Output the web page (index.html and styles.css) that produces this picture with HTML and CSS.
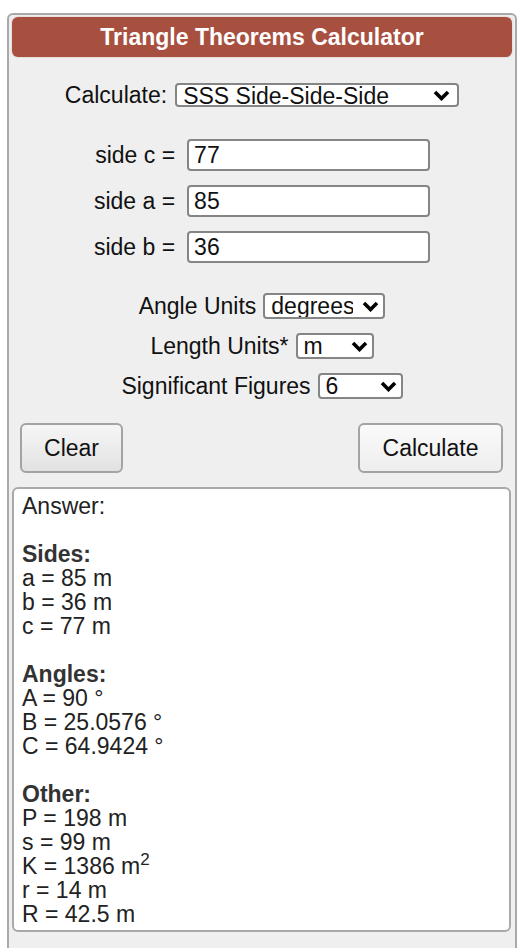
FILE: index.html
```html
<!DOCTYPE html>
<html lang="en">
<head>
<meta charset="utf-8">
<title>Triangle Theorems Calculator</title>
<link rel="stylesheet" href="styles.css">
</head>
<body>
<div class="calc">
  <div class="title">Triangle Theorems Calculator</div>

  <div class="row calc-row">
    <label class="lbl" for="mode">Calculate:</label>
    <span class="sel sel-mode">
      <select id="mode"><option>SSS Side-Side-Side</option></select>
      <svg class="chev" width="17" height="11" viewBox="0 0 17 11"><polyline points="2,2 8.5,8.5 15,2" fill="none" stroke="#000" stroke-width="3.6"/></svg>
    </span>
  </div>

  <div class="sides">
    <label class="lbl side-lbl" for="sc">side c =</label><input class="inp" id="sc" type="text" value="77">
    <label class="lbl side-lbl" for="sa">side a =</label><input class="inp" id="sa" type="text" value="85">
    <label class="lbl side-lbl" for="sb">side b =</label><input class="inp" id="sb" type="text" value="36">
  </div>

  <div class="units">
    <div class="row">
      <label class="lbl" for="au">Angle Units</label>
      <span class="sel sel-angle">
        <select id="au"><option>degrees</option></select>
        <svg class="chev" width="17" height="11" viewBox="0 0 17 11"><polyline points="2,2 8.5,8.5 15,2" fill="none" stroke="#000" stroke-width="3.6"/></svg>
      </span>
    </div>
    <div class="row">
      <label class="lbl" for="lu">Length Units*</label>
      <span class="sel sel-length">
        <select id="lu"><option>m</option></select>
        <svg class="chev" width="17" height="11" viewBox="0 0 17 11"><polyline points="2,2 8.5,8.5 15,2" fill="none" stroke="#000" stroke-width="3.6"/></svg>
      </span>
    </div>
    <div class="row">
      <label class="lbl" for="sf">Significant Figures</label>
      <span class="sel sel-sig">
        <select id="sf"><option>6</option></select>
        <svg class="chev" width="17" height="11" viewBox="0 0 17 11"><polyline points="2,2 8.5,8.5 15,2" fill="none" stroke="#000" stroke-width="3.6"/></svg>
      </span>
    </div>
  </div>

  <div class="buttons">
    <button class="btn btn-clear" type="button">Clear</button>
    <button class="btn btn-calc" type="button">Calculate</button>
  </div>

  <div class="answer">
    <div>Answer:</div>
    <div class="blank"></div>
    <div class="head">Sides:</div>
    <div>a = 85 m</div>
    <div>b = 36 m</div>
    <div>c = 77 m</div>
    <div class="blank"></div>
    <div class="head">Angles:</div>
    <div>A = 90 °</div>
    <div>B = 25.0576 °</div>
    <div>C = 64.9424 °</div>
    <div class="blank"></div>
    <div class="head">Other:</div>
    <div>P = 198 m</div>
    <div>s = 99 m</div>
    <div>K = 1386 m<sup>2</sup></div>
    <div>r = 14 m</div>
    <div>R = 42.5 m</div>
  </div>
</div>
</body>
</html>
```

FILE: styles.css
```css
* {
  box-sizing: border-box;
}

html, body {
  margin: 0;
  padding: 0;
  background: #ffffff;
}

body {
  font-family: "Liberation Sans", Arial, sans-serif;
  font-size: 23px;
  color: #111;
}

.calc {
  width: 510px;
  margin: 13px 0 0 7px;
  padding: 2px 3px 30px 3px;
  background: #efefef;
  border: 2px solid #a9a9a9;
  border-radius: 6px;
}

.title {
  height: 40px;
  line-height: 40px;
  background: #a8503f;
  border-radius: 6px;
  color: #fff;
  font-weight: bold;
  font-size: 23px;
  text-align: center;
  box-shadow: 0 0 2px rgba(168, 80, 63, 0.35);
}

.row {
  display: flex;
  justify-content: center;
  align-items: center;
  gap: 7px;
  line-height: 24px;
}

.lbl {
  color: #111;
  white-space: nowrap;
}

.calc-row {
  margin-top: 26px;
  gap: 8px;
}

.sel {
  position: relative;
  display: inline-flex;
}

.sel select {
  -webkit-appearance: none;
  appearance: none;
  font-family: "Liberation Sans", Arial, sans-serif;
  font-size: 23px;
  color: #111;
  background: #fff;
  border: 2px solid #858585;
  border-radius: 4px;
  padding: 0 30px 0 6px;
  margin: 0;
  height: 26px;
  line-height: 22px;
  outline: none;
}

.chev {
  position: absolute;
  right: 6px;
  top: 50%;
  margin-top: -5px;
  pointer-events: none;
}

.sel-mode select {
  width: 284px;
  height: 24px;
}

.sel-mode .chev {
  right: 9px;
}

.sel-angle select {
  width: 122px;
}

.sel-length select {
  width: 78px;
}

.sel-sig select {
  width: 85px;
}

.sides {
  margin-top: 32px;
  display: grid;
  grid-template-columns: auto 243px;
  justify-content: center;
  align-items: center;
  column-gap: 12px;
  row-gap: 14px;
}

.side-lbl {
  justify-self: end;
}

.inp {
  width: 243px;
  height: 32px;
  font-family: "Liberation Sans", Arial, sans-serif;
  font-size: 23px;
  color: #111;
  background: #fff;
  border: 2px solid #858585;
  border-radius: 4px;
  padding: 0 5px;
  margin: 0;
  outline: none;
}

.units {
  margin-top: 30px;
  display: flex;
  flex-direction: column;
  gap: 14px;
}

.units .row {
  height: 26px;
}

.buttons {
  margin-top: 24px;
  display: flex;
  justify-content: space-between;
  padding: 0 9px 0 8px;
}

.btn {
  height: 50px;
  font-family: "Liberation Sans", Arial, sans-serif;
  font-size: 23px;
  color: #111;
  border: 2px solid #a3a3a3;
  border-radius: 6px;
  padding: 0;
  margin: 0;
  cursor: pointer;
}

.btn-clear {
  width: 103px;
  background: linear-gradient(#f6f6f6, #e2e2e2);
}

.btn-calc {
  width: 145px;
  background: linear-gradient(#fafafa, #eeeeee);
}

.answer {
  margin-top: 14px;
  margin-right: 1px;
  background: #fff;
  border: 2px solid #a9a9a9;
  border-radius: 6px;
  padding: 5px 8px 4px 8px;
  color: #222;
  font-size: 23px;
  line-height: 24px;
}

.answer .blank {
  height: 24px;
}

.answer .head {
  font-weight: bold;
  color: #333;
}

.answer sup {
  font-size: 17px;
  line-height: 0;
  vertical-align: 9px;
}
```
